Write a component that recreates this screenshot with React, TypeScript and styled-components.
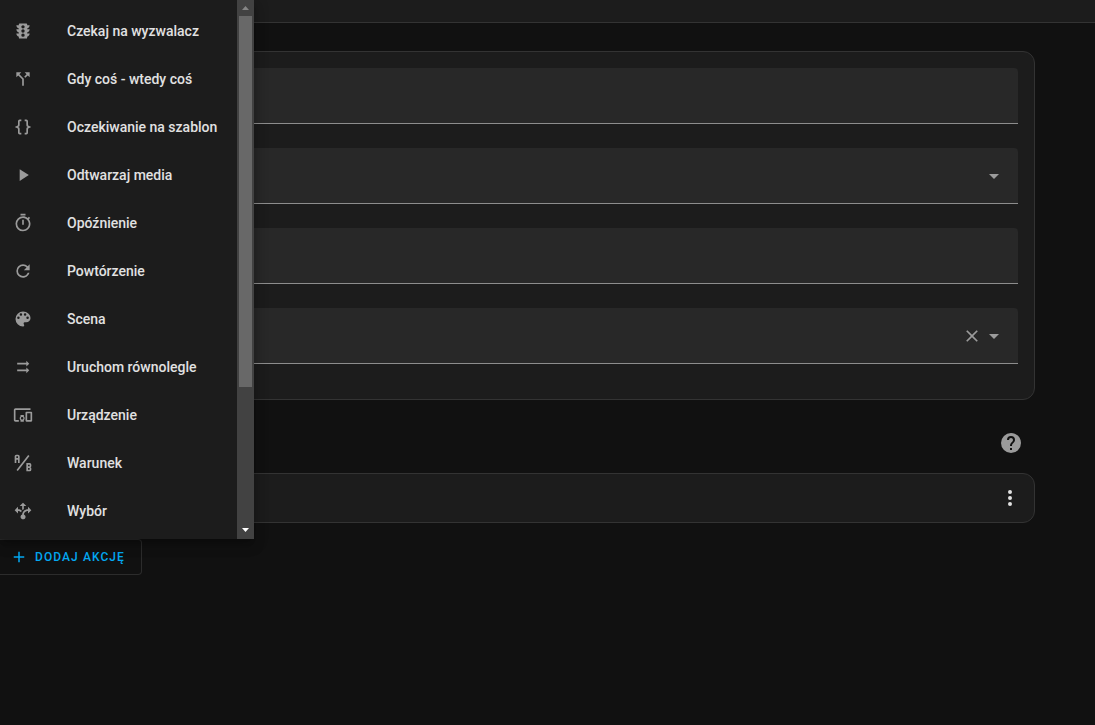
import React from "react";
import styled, { createGlobalStyle } from "styled-components";

const GlobalStyle = createGlobalStyle`
  *, *::before, *::after { box-sizing: border-box; }
  html, body { margin: 0; background: #111111; }
  body, button, input, select { font-family: Roboto, "Noto Sans", sans-serif; }
`;

const icons = {
  trafficLight:
    "M12,9A2,2 0 0,1 10,7C10,5.89 10.9,5 12,5C13.11,5 14,5.89 14,7A2,2 0 0,1 12,9M12,14A2,2 0 0,1 10,12C10,10.89 10.9,10 12,10C13.11,10 14,10.89 14,12A2,2 0 0,1 12,14M12,19A2,2 0 0,1 10,17C10,15.89 10.9,15 12,15C13.11,15 14,15.89 14,17A2,2 0 0,1 12,19M20,10H17V8.86C18.72,8.41 20,6.86 20,5H17V4A1,1 0 0,0 16,3H8A1,1 0 0,0 7,4V5H4C4,6.86 5.28,8.41 7,8.86V10H4C4,11.86 5.28,13.41 7,13.86V15H4C4,16.86 5.28,18.41 7,18.86V20A1,1 0 0,0 8,21H16A1,1 0 0,0 17,20V18.86C18.72,18.41 20,16.86 20,15H17V13.86C18.72,13.41 20,11.86 20,10Z",
  callSplit:
    "M14,4L16.29,6.29L13.41,9.17L14.83,10.59L17.71,7.71L20,10V4M10,4H4V10L6.29,7.71L11,12.41V20H13V11.59L7.71,6.29",
  codeBraces:
    "M8,3A2,2 0 0,0 6,5V9A2,2 0 0,1 4,11H3V13H4A2,2 0 0,1 6,15V19A2,2 0 0,0 8,21H10V19H8V14A2,2 0 0,0 6,12A2,2 0 0,0 8,10V5H10V3M16,3A2,2 0 0,1 18,5V9A2,2 0 0,0 20,11H21V13H20A2,2 0 0,0 18,15V19A2,2 0 0,1 16,21H14V19H16V14A2,2 0 0,1 18,12A2,2 0 0,1 16,10V5H14V3H16Z",
  play: "M8,5.14V19.14L19,12.14L8,5.14Z",
  timer:
    "M12,20A7,7 0 0,1 5,13A7,7 0 0,1 12,6A7,7 0 0,1 19,13A7,7 0 0,1 12,20M19.03,7.39L20.45,5.97C20,5.46 19.55,5 19.04,4.56L17.62,6C16.07,4.74 14.12,4 12,4A9,9 0 0,0 3,13A9,9 0 0,0 12,22C17,22 21,17.97 21,13C21,10.88 20.26,8.93 19.03,7.39M11,14H13V8H11M15,1H9V3H15V1Z",
  refresh:
    "M17.65,6.35C16.2,4.9 14.21,4 12,4A8,8 0 0,0 4,12A8,8 0 0,0 12,20C15.73,20 18.84,17.45 19.73,14H17.65C16.83,16.33 14.61,18 12,18A6,6 0 0,1 6,12A6,6 0 0,1 12,6C13.66,6 15.14,6.69 16.22,7.78L13,11H20V4L17.65,6.35Z",
  palette:
    "M17.5,12A1.5,1.5 0 0,1 16,10.5A1.5,1.5 0 0,1 17.5,9A1.5,1.5 0 0,1 19,10.5A1.5,1.5 0 0,1 17.5,12M14.5,8A1.5,1.5 0 0,1 13,6.5A1.5,1.5 0 0,1 14.5,5A1.5,1.5 0 0,1 16,6.5A1.5,1.5 0 0,1 14.5,8M9.5,8A1.5,1.5 0 0,1 8,6.5A1.5,1.5 0 0,1 9.5,5A1.5,1.5 0 0,1 11,6.5A1.5,1.5 0 0,1 9.5,8M6.5,12A1.5,1.5 0 0,1 5,10.5A1.5,1.5 0 0,1 6.5,9A1.5,1.5 0 0,1 8,10.5A1.5,1.5 0 0,1 6.5,12M12,3A9,9 0 0,0 3,12A9,9 0 0,0 12,21A1.5,1.5 0 0,0 13.5,19.5C13.5,19.11 13.35,18.76 13.11,18.5C12.88,18.23 12.73,17.88 12.73,17.5A1.5,1.5 0 0,1 14.23,16H16A5,5 0 0,0 21,11C21,6.58 16.97,3 12,3Z",
  parallel: "M16,4.5V7H5V9H16V11.5L19.5,8M16,12.5V15H5V17H16V19.5L19.5,16",
  devices:
    "M3 6H21V4H3C1.9 4 1 4.9 1 6V18C1 19.1 1.9 20 3 20H7V18H3V6M13 12H9V13.78C8.39 14.33 8 15.11 8 16C8 16.89 8.39 17.67 9 18.22V20H13V18.22C13.61 17.67 14 16.88 14 16S13.61 14.33 13 13.78V12M11 17.5C10.17 17.5 9.5 16.83 9.5 16S10.17 14.5 11 14.5 12.5 15.17 12.5 16 11.83 17.5 11 17.5M22 8H16C15.5 8 15 8.5 15 9V19C15 19.5 15.5 20 16 20H22C22.5 20 23 19.5 23 19V9C23 8.5 22.5 8 22 8M21 18H17V10H21V18Z",
  abTesting:
    "M4 2A2 2 0 0 0 2 4V12H4V8H6V12H8V4A2 2 0 0 0 6 2H4M4 4H6V6H4M22 15.5V14A2 2 0 0 0 20 12H16V22H20A2 2 0 0 0 22 20V18.5A1.54 1.54 0 0 0 20.5 17A1.54 1.54 0 0 0 22 15.5M20 20H18V18H20V20M20 16H18V14H20M5.79 21.61L4.21 20.39L18.21 2.39L19.79 3.61Z",
  decision:
    "M9.64,13.4C8.63,12.5 7.34,12.03 6,12V15L2,11L6,7V10C7.67,10 9.3,10.57 10.63,11.59C10.22,12.15 9.89,12.76 9.64,13.4M18,15V12C17.5,12 13.5,12.16 13.05,16.2C14.61,16.75 15.43,18.47 14.88,20.03C14.33,21.59 12.61,22.41 11.05,21.86C9.5,21.3 8.67,19.59 9.22,18.03C9.5,17.17 10.2,16.5 11.05,16.2C11.34,12.61 14.4,9.88 18,10V7L22,11L18,15M13,6H16L12,2L8,6H11V10.1C11.3,10.35 11.6,10.6 11.8,10.8C12.15,10.35 12.55,9.95 13,9.6V6Z",
  help: "M15.07,11.25L14.17,12.17C13.45,12.89 13,13.5 13,15H11V14.5C11,13.39 11.45,12.39 12.17,11.67L13.41,10.41C13.78,10.05 14,9.55 14,9C14,7.89 13.1,7 12,7A2,2 0 0,0 10,9H8A4,4 0 0,1 12,5A4,4 0 0,1 16,9C16,9.88 15.64,10.67 15.07,11.25M13,19H11V17H13M12,2A10,10 0 0,0 2,12A10,10 0 0,0 12,22A10,10 0 0,0 22,12C22,6.47 17.5,2 12,2Z",
  dots: "M12,16A2,2 0 0,1 14,18A2,2 0 0,1 12,20A2,2 0 0,1 10,18A2,2 0 0,1 12,16M12,10A2,2 0 0,1 14,12A2,2 0 0,1 12,14A2,2 0 0,1 10,12A2,2 0 0,1 12,10M12,4A2,2 0 0,1 14,6A2,2 0 0,1 12,8A2,2 0 0,1 10,6A2,2 0 0,1 12,4Z",
  close:
    "M19,6.41L17.59,5L12,10.59L6.41,5L5,6.41L10.59,12L5,17.59L6.41,19L12,13.41L17.59,19L19,17.59L13.41,12L19,6.41Z",
  menuDown: "M7,10L12,15L17,10H7Z",
  plus: "M19,13H13V19H11V13H5V11H11V5H13V11H19V13Z",
};

type IconName = keyof typeof icons;

const IconSvg = styled.svg`
  display: block;
  flex: none;
  fill: currentColor;
`;

const Icon = ({ name, size }: { name: IconName; size: number }) => (
  <IconSvg width={size} height={size} viewBox="0 0 24 24" aria-hidden="true">
    <path d={icons[name]} />
  </IconSvg>
);

const Page = styled.div`
  position: relative;
  min-height: 100vh;
  background: #111111;
`;

const TopBar = styled.header`
  height: 23px;
  background: #1c1c1c;
  border-bottom: 1px solid #333333;
`;

const Content = styled.main`
  padding: 28px 60px 0 0;
`;

const Card = styled.section`
  border: 1px solid #333333;
  border-radius: 12px;
  background: #1c1c1c;
`;

const FormCard = styled(Card)`
  display: flex;
  flex-direction: column;
  gap: 24px;
  padding: 16px 16px 35px;
`;

const Field = styled.div`
  display: grid;
  grid-template-columns: minmax(0, 1fr);
  align-items: center;
  height: 56px;
  background: #282828;
  border-bottom: 1px solid #8d8d8d;
  border-radius: 4px 4px 0 0;

  > * {
    grid-area: 1 / 1;
  }
`;

const controlStyle = `
  width: 100%;
  height: 55px;
  padding: 0 16px;
  border: 0;
  outline: 0;
  background: transparent;
  color: #e1e1e1;
  font-size: 16px;
`;

const TextInput = styled.input`
  ${controlStyle}
`;

const Select = styled.select`
  ${controlStyle}
  appearance: none;
`;

const FieldIcons = styled.div`
  display: flex;
  justify-self: end;
  align-items: center;
  margin-right: 12px;
  color: #9b9b9b;
  pointer-events: none;
`;

const IconButton = styled.button<{ $bright?: boolean }>`
  display: flex;
  padding: 0;
  border: 0;
  background: none;
  color: ${(p) => (p.$bright ? "#e1e1e1" : "#9b9b9b")};
  cursor: pointer;
  pointer-events: auto;
`;

const SectionHeader = styled.div`
  display: flex;
  justify-content: flex-end;
  padding: 31px 12px 18px 0;
`;

const HelpLink = styled.a`
  display: flex;
  color: #9b9b9b;
`;

const ActionCard = styled(Card)`
  display: flex;
  align-items: center;
  justify-content: flex-end;
  height: 50px;
  padding-right: 12px;
`;

const AddButton = styled.button`
  display: flex;
  align-items: center;
  gap: 7px;
  height: 36px;
  margin-top: 16px;
  padding: 0 16px 0 10px;
  border: 1px solid #2c2c2c;
  border-left: 0;
  border-radius: 0 4px 4px 0;
  background: transparent;
  color: #03a9f4;
  font-size: 12px;
  font-weight: 500;
  letter-spacing: 0.09em;
  text-transform: uppercase;
  cursor: pointer;
`;

const Menu = styled.div`
  position: absolute;
  top: 0;
  left: 0;
  display: flex;
  width: 254px;
  background: #1c1c1c;
  box-shadow: 0 5px 5px -3px rgba(0, 0, 0, 0.2),
    0 8px 10px 1px rgba(0, 0, 0, 0.14), 0 3px 14px 2px rgba(0, 0, 0, 0.12);
`;

const MenuList = styled.div`
  flex: 1;
  padding: 7px 0 4px;
`;

const MenuItem = styled.button`
  display: flex;
  align-items: center;
  gap: 34px;
  width: 100%;
  height: 48px;
  padding: 0 0 0 13px;
  border: 0;
  background: none;
  color: #9b9b9b;
  text-align: left;
  cursor: pointer;
`;

const MenuLabel = styled.span`
  color: #e1e1e1;
  font-size: 14px;
  font-weight: 500;
  line-height: 20px;
  white-space: nowrap;
`;

const ScrollBar = styled.div`
  display: flex;
  flex-direction: column;
  width: 17px;
  background: #424242;
`;

const ScrollArrow = styled.div<{ $active?: boolean }>`
  display: flex;
  align-items: center;
  justify-content: center;
  height: ${(p) => (p.$active ? "18px" : "16px")};
  color: ${(p) => (p.$active ? "#ffffff" : "#868686")};
`;

const ScrollTrack = styled.div`
  flex: 1;
  padding: 0 2px;
`;

const ScrollThumb = styled.div`
  height: 73.5%;
  background: #686868;
`;

const actions: { icon: IconName; label: string }[] = [
  { icon: "trafficLight", label: "Czekaj na wyzwalacz" },
  { icon: "callSplit", label: "Gdy coś - wtedy coś" },
  { icon: "codeBraces", label: "Oczekiwanie na szablon" },
  { icon: "play", label: "Odtwarzaj media" },
  { icon: "timer", label: "Opóźnienie" },
  { icon: "refresh", label: "Powtórzenie" },
  { icon: "palette", label: "Scena" },
  { icon: "parallel", label: "Uruchom równolegle" },
  { icon: "devices", label: "Urządzenie" },
  { icon: "abTesting", label: "Warunek" },
  { icon: "decision", label: "Wybór" },
];

export default function App() {
  return (
    <>
      <GlobalStyle />
      <Page>
        <TopBar />
        <Content>
          <FormCard>
            <Field>
              <TextInput type="text" aria-label="Nazwa" />
            </Field>
            <Field>
              <Select aria-label="Ikona" />
              <FieldIcons>
                <Icon name="menuDown" size={24} />
              </FieldIcons>
            </Field>
            <Field>
              <TextInput type="text" aria-label="Identyfikator" />
            </Field>
            <Field>
              <Select aria-label="Tryb" />
              <FieldIcons>
                <IconButton type="button" aria-label="Wyczyść">
                  <Icon name="close" size={20} />
                </IconButton>
                <Icon name="menuDown" size={24} />
              </FieldIcons>
            </Field>
          </FormCard>
          <SectionHeader>
            <HelpLink href="#pomoc" aria-label="Pomoc">
              <Icon name="help" size={24} />
            </HelpLink>
          </SectionHeader>
          <ActionCard>
            <IconButton type="button" aria-label="Więcej" $bright>
              <Icon name="dots" size={24} />
            </IconButton>
          </ActionCard>
          <AddButton type="button">
            <Icon name="plus" size={18} />
            Dodaj akcję
          </AddButton>
        </Content>
        <Menu>
          <MenuList role="menu">
            {actions.map((action) => (
              <MenuItem key={action.label} type="button" role="menuitem">
                <Icon name={action.icon} size={20} />
                <MenuLabel>{action.label}</MenuLabel>
              </MenuItem>
            ))}
          </MenuList>
          <ScrollBar aria-hidden="true">
            <ScrollArrow>
              <svg width="7" height="4" viewBox="0 0 7 4">
                <path d="M0 4L3.5 0L7 4Z" fill="currentColor" />
              </svg>
            </ScrollArrow>
            <ScrollTrack>
              <ScrollThumb />
            </ScrollTrack>
            <ScrollArrow $active>
              <svg width="7" height="4" viewBox="0 0 7 4">
                <path d="M0 0L3.5 4L7 0Z" fill="currentColor" />
              </svg>
            </ScrollArrow>
          </ScrollBar>
        </Menu>
      </Page>
    </>
  );
}
